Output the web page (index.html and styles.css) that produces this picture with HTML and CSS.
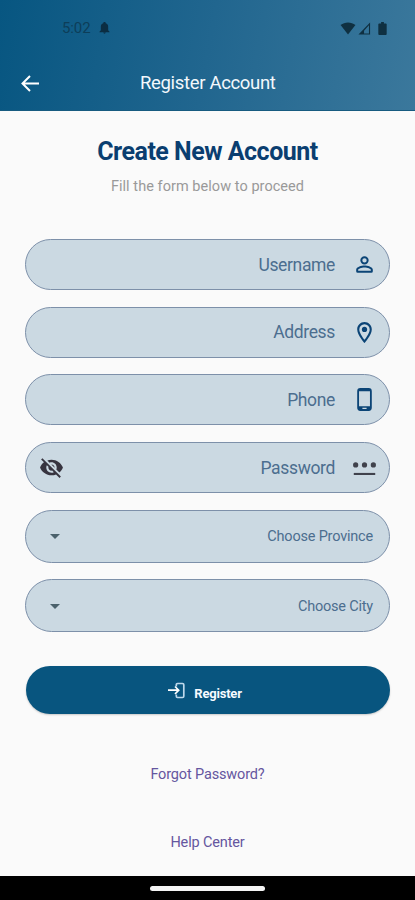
FILE: index.html
```html
<!DOCTYPE html>
<html lang="en">
<head>
<meta charset="utf-8">
<title>Register Account</title>
<link rel="stylesheet" href="styles.css">
</head>
<body>
<header class="top">
  <div class="status">
    <span class="time">5:02</span>
    <svg class="bell" width="11" height="12" viewBox="0 0 12 13"><path d="M6 0c1 0 1.300.6 1.300 1.200C9.200 1.800 10 3.300 10 5v4l1.500 1.500V11H.5v-.5L2 9V5c0-1.700.8-3.200 2.700-3.800C4.700.6 5 0 6 0zM4.700 11.500h2.600c0 1.600-2.600 1.600-2.600 0z"/></svg>
    <span class="signals">
      <svg width="16" height="13" viewBox="0 0 16 14"><path d="M0 3.200C4.500-.5 11.500-.5 16 3.200L8 13.500z"/></svg>
      <svg width="13" height="13" viewBox="0 0 13 14"><path fill-rule="evenodd" d="M12.500 .5v13H0zM11.300 3.500L6 9.300v3h5.300z"/></svg>
      <svg class="battery" width="9" height="13" viewBox="0 0 9 14"><path d="M3 0h3v1.500h2q1 0 1 1V13q0 1-1 1H1q-1 0-1-1V2.500q0-1 1-1h2z"/></svg>
    </span>
  </div>
  <div class="bar">
    <svg class="back" width="18" height="17" viewBox="0 0 18 17"><path d="M9 1L1.500 8.500 9 16M1.500 8.500H18"/></svg>
    <span class="bar-title">Register Account</span>
  </div>
</header>
<main>
  <h1>Create New Account</h1>
  <p class="hint">Fill the form below to proceed</p>
  <form class="form">
    <div class="field"><span class="label">Username</span>
      <svg class="icon" viewBox="0 0 24 24"><path d="M12 5.900a2.100 2.100 0 1 1 0 4.200 2.100 2.100 0 0 1 0-4.200m0 9c2.970 0 6.100 1.460 6.100 2.100v1.100H5.900V17c0-.64 3.130-2.100 6.100-2.100M12 4a4 4 0 1 0 0 8 4 4 0 0 0 0-8zm0 9c-2.670 0-8 1.340-8 4v1.500q0 1.500 1.500 1.500h13q1.500 0 1.500-1.500V17c0-2.660-5.330-4-8-4z"/></svg></div>
    <div class="field"><span class="label">Address</span>
      <svg class="icon" viewBox="0 0 24 24"><path d="M12 2C8.130 2 5 5.130 5 9c0 5.250 7 13 7 13s7-7.750 7-13c0-3.870-3.130-7-7-7zM7 9a5 5 0 0 1 10 0c0 2.880-2.880 7.190-5 9.880C9.920 16.210 7 11.850 7 9z"/><circle cx="12" cy="9" r="2.500"/></svg></div>
    <div class="field"><span class="label">Phone</span>
      <svg class="icon" viewBox="0 0 24 24"><path fill-rule="evenodd" d="M16 1H8a3 3 0 0 0-3 3v16a3 3 0 0 0 3 3h8a3 3 0 0 0 3-3V4a3 3 0 0 0-3-3zm-2 20h-4v-1h4v1zm3.250-2.500H6.750V4h10.500v14.500z"/></svg></div>
    <div class="field"><svg class="eye" viewBox="0 0 24 24"><path d="M12 7c2.760 0 5 2.240 5 5 0 .65-.13 1.260-.36 1.830l2.920 2.920c1.510-1.260 2.700-2.890 3.430-4.750-1.730-4.390-6-7.500-11-7.500-1.400 0-2.740.25-3.980.7l2.160 2.160C10.740 7.130 11.350 7 12 7zM2 4.270l2.280 2.280.46.46C3.080 8.300 1.780 10.020 1 12c1.730 4.390 6 7.500 11 7.500 1.550 0 3.030-.3 4.380-.84l.42.42L19.730 22 21 20.730 3.270 3 2 4.270zM7.530 9.800l1.550 1.550c-.05.21-.08.43-.08.65 0 1.660 1.340 3 3 3 .22 0 .44-.03.65-.08l1.550 1.550c-.67.33-1.410.53-2.200.53-2.760 0-5-2.240-5-5 0-.79.2-1.530.53-2.200zm4.310-.78l3.150 3.150.02-.16c0-1.660-1.340-3-3-3l-.17.01z"/></svg>
      <span class="label">Password</span>
      <svg class="icon dark" viewBox="0 0 24 24"><path d="M1.700 17.200h20.600v2H1.700z"/><circle cx="3.500" cy="9.500" r="2.500"/><circle cx="12" cy="9.500" r="2.500"/><circle cx="20.500" cy="9.500" r="2.500"/></svg></div>
    <div class="field select"><svg class="caret" viewBox="0 0 10 5"><path d="M0 0h10L5 5z"/></svg><span class="label">Choose Province</span></div>
    <div class="field select"><svg class="caret" viewBox="0 0 10 5"><path d="M0 0h10L5 5z"/></svg><span class="label">Choose City</span></div>
    <button class="submit" type="button">
      <svg width="18" height="17" viewBox="0 0 18 17"><path d="M0 8.200h10.500M7 4.500l3.700 3.700L7 12"/><path class="door" d="M8.300 4.500V2.700q0-1.200 1.200-1.200h5q1.300 0 1.300 1.200v11.600q0 1.200-1.300 1.200h-5q-1.200 0-1.200-1.200V12.500"/></svg>
      <span>Register</span>
    </button>
  </form>
  <a class="link forgot">Forgot Password?</a>
  <a class="link help">Help Center</a>
</main>
<footer class="nav"><span class="pill"></span></footer>
</body>
</html>
```
FILE: styles.css
```css
* { box-sizing: border-box; }
body {
  margin: 0;
  height: 900px;
  display: flex;
  flex-direction: column;
  overflow: hidden;
  background: #fafafa;
  font-family: Roboto, "Noto Sans", sans-serif;
}
svg { display: block; flex: none; }
.top {
  height: 111px;
  flex: none;
  background: linear-gradient(100deg, #075681 0%, #21668f 50%, #3b789c 100%);
  border-bottom: 1px solid #175b80;
}
.status {
  height: 56px;
  padding: 0 28px 0 62px;
  display: flex;
  align-items: center;
  color: #0d3e59;
  font-size: 15px;
}
.time { width: 37px; letter-spacing: -.1px; }
.bell { fill: #0b2d42; }
.signals { display: flex; gap: 2px; margin-left: auto; fill: #0f3041; }
.battery { margin-left: 5px; }
.bar {
  height: 54px;
  padding-left: 21px;
  display: flex;
  align-items: center;
  color: #f3f8fc;
}
.back { fill: none; stroke: #fff; stroke-width: 2; }
.bar-title { margin-left: 101px; font-size: 18.500px; letter-spacing: -.33px; white-space: nowrap; }
main {
  flex: 1;
  padding: 25px 25px 0;
  display: flex;
  flex-direction: column;
  align-items: center;
}
h1 {
  margin: 0;
  font-size: 25px;
  line-height: 32px;
  font-weight: 700;
  letter-spacing: -.5px;
  color: #0a3e70;
  white-space: nowrap;
}
.hint { margin: 9px 0 0; font-size: 14.500px; line-height: 20px; letter-spacing: .05px; color: #999; white-space: nowrap; }
.form { width: 365px; margin-top: 42px; display: flex; flex-direction: column; gap: 16.700px; }
.field {
  height: 51px;
  padding: 0 12px 0 13px;
  display: flex;
  align-items: center;
  border: 1px solid #7d90a9;
  border-radius: 27px;
  background: #cbd9e2;
  color: #4c6e8f;
}
.label { margin-left: auto; font-size: 17.500px; letter-spacing: -.35px; white-space: nowrap; }
.icon { width: 25px; height: 25px; margin-left: 17px; fill: #0b4476; }
.icon.dark { fill: #40424c; }
.eye { width: 25px; height: 25px; fill: #37343f; }
.select { height: 53px; padding: 1px 16px 0 24px; }
.select .label { font-size: 14.500px; letter-spacing: -.2px; }
.caret { width: 10px; height: 5px; fill: #4b626c; }
.submit {
  height: 48px;
  margin: 17px 0 0 1px;
  padding: 0 6px 0 0;
  display: flex;
  justify-content: center;
  gap: 8px;
  border: 0;
  border-radius: 25px;
  background: #08557f;
  color: #f7fbff;
  font: 700 13px/16px Roboto, sans-serif;
  letter-spacing: -.2px;
  box-shadow: 0 1px 2px #0003;
}
.submit svg { margin-top: 16px; fill: none; stroke: #fff; stroke-width: 1.700; }
.submit .door { stroke: #bdd8eb; }
.submit span { margin-top: 20px; }
.link { font-size: 14.500px; line-height: 20px; letter-spacing: -.15px; color: #65569f; white-space: nowrap; }
.forgot { margin-top: 51px; }
.help { margin-top: 48px; }
.nav { height: 24px; flex: none; display: flex; justify-content: center; align-items: center; background: #000; }
.pill { width: 115px; height: 5px; border-radius: 3px; background: #f4f4f4; }
```
